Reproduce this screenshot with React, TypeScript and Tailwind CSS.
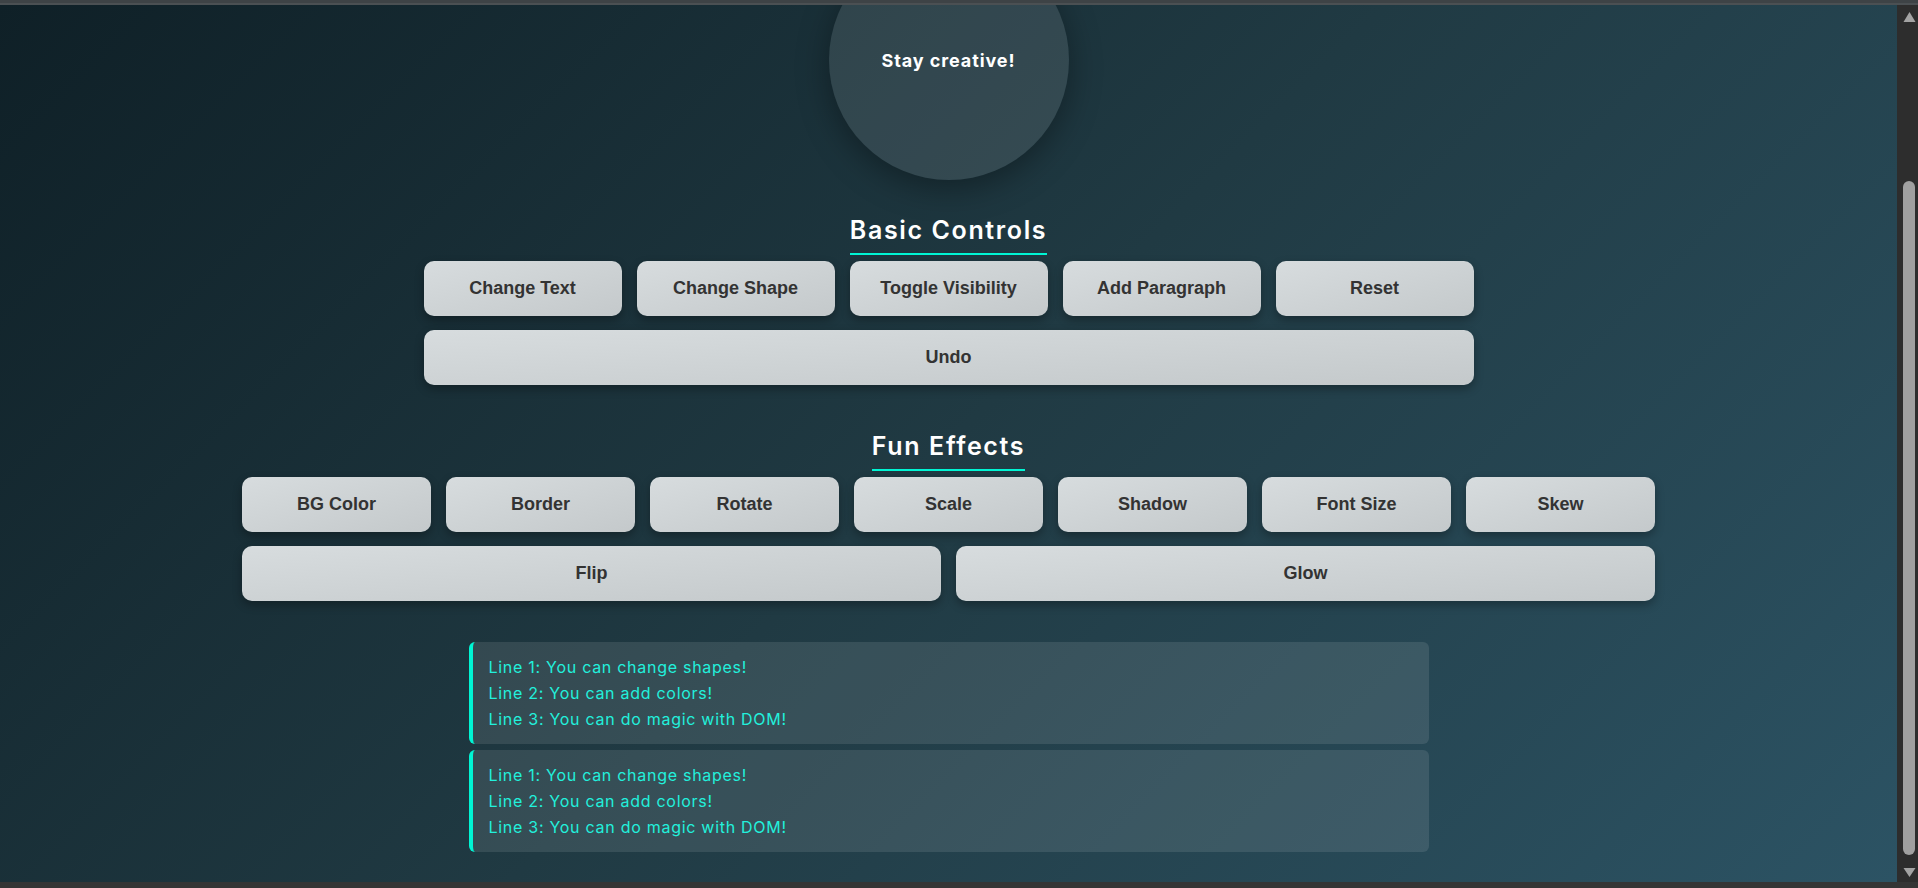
import React from "react";

const basic = ["Change Text", "Change Shape", "Toggle Visibility", "Add Paragraph", "Reset"];
const fun = ["BG Color", "Border", "Rotate", "Scale", "Shadow", "Font Size", "Skew"];
const lines = ["Line 1: You can change shapes!", "Line 2: You can add colors!", "Line 3: You can do magic with DOM!"];

const btn =
  "h-[55px] rounded-[10px] bg-linear-to-br from-[#d7dcde] to-[#c4c9cb] text-[18px] font-bold text-[#333] shadow-[0_4px_10px_rgba(0,0,0,0.3)] font-['Liberation_Sans',Arial,sans-serif]";

function Heading({ text }: { text: string }) {
  return (
    <h2 className="inline-block border-b-2 border-[#00f5d4] pb-2 mb-[6px] text-[25px] leading-[30px] font-semibold text-white tracking-[0.065em] font-['Inter',sans-serif]">
      {text}
    </h2>
  );
}

function Scrollbar() {
  return (
    <div className="w-[21px] bg-[#2d2d2d] flex flex-col items-center">
      <svg width="13" height="12" viewBox="0 0 13 12" className="mt-[6px] ml-[3px]">
        <path d="M6.5 1 L12.5 11 L0.5 11 Z" fill="#a3a3a3" />
      </svg>
      <div className="mt-[158px] h-[674px] w-[12px] ml-[3px] rounded-full bg-[#a0a0a0]" />
      <svg width="13" height="11" viewBox="0 0 13 11" className="mt-[12px] ml-[3px]">
        <path d="M0.5 1 L12.5 1 L6.5 10 Z" fill="#a3a3a3" />
      </svg>
    </div>
  );
}

export default function App() {
  return (
    <div className="h-[888px] w-full flex flex-col bg-[#333] overflow-hidden">
      <div className="h-[3px] bg-[#3e4346]" />
      <div className="h-[2px] bg-[#4b5053]" />
      <div className="flex flex-1 min-h-0">
        <main className="flex-1 overflow-hidden bg-linear-135 from-[#0f2027] via-[#203a43] to-[#2c5364] flex flex-col items-center">
          <div className="mt-[-65px] w-[240px] h-[240px] shrink-0 rounded-full bg-white/10 shadow-[0_8px_32px_rgba(0,0,0,0.35)] flex items-center justify-center">
            <span className="text-white text-[18px] font-bold font-['Inter',sans-serif] tracking-[0.05em]">Stay creative!</span>
          </div>

          <section className="mt-[35px] flex flex-col items-center">
            <Heading text="Basic Controls" />
            <div className="w-[1050px] grid grid-cols-5 gap-x-[15px] gap-y-[14px]">
              {basic.map((b) => (
                <button key={b} className={btn}>
                  {b}
                </button>
              ))}
              <button className={btn + " col-span-5"}>Undo</button>
            </div>
          </section>

          <section className="mt-[46px] flex flex-col items-center">
            <Heading text="Fun Effects" />
            <div className="w-[1413px] grid grid-cols-7 gap-x-[15px]">
              {fun.map((b) => (
                <button key={b} className={btn}>
                  {b}
                </button>
              ))}
            </div>
            <div className="mt-[14px] w-[1413px] grid grid-cols-2 gap-x-[15px]">
              <button className={btn}>Flip</button>
              <button className={btn}>Glow</button>
            </div>
          </section>

          <section className="mt-[41px] w-[960px] flex flex-col gap-[6px]">
            {[0, 1].map((i) => (
              <p
                key={i}
                className="rounded-[6px] border-l-4 border-[#00f5d4] bg-white/10 py-3 pl-4 text-[16px] leading-[26px] text-[#22f0dc] font-['Inter',sans-serif] tracking-[0.045em]"
              >
                {lines.map((l) => (
                  <span key={l} className="block">
                    {l}
                  </span>
                ))}
              </p>
            ))}
          </section>
        </main>
        <Scrollbar />
      </div>
      <div className="h-[6px] bg-[#353535]" />
    </div>
  );
}
